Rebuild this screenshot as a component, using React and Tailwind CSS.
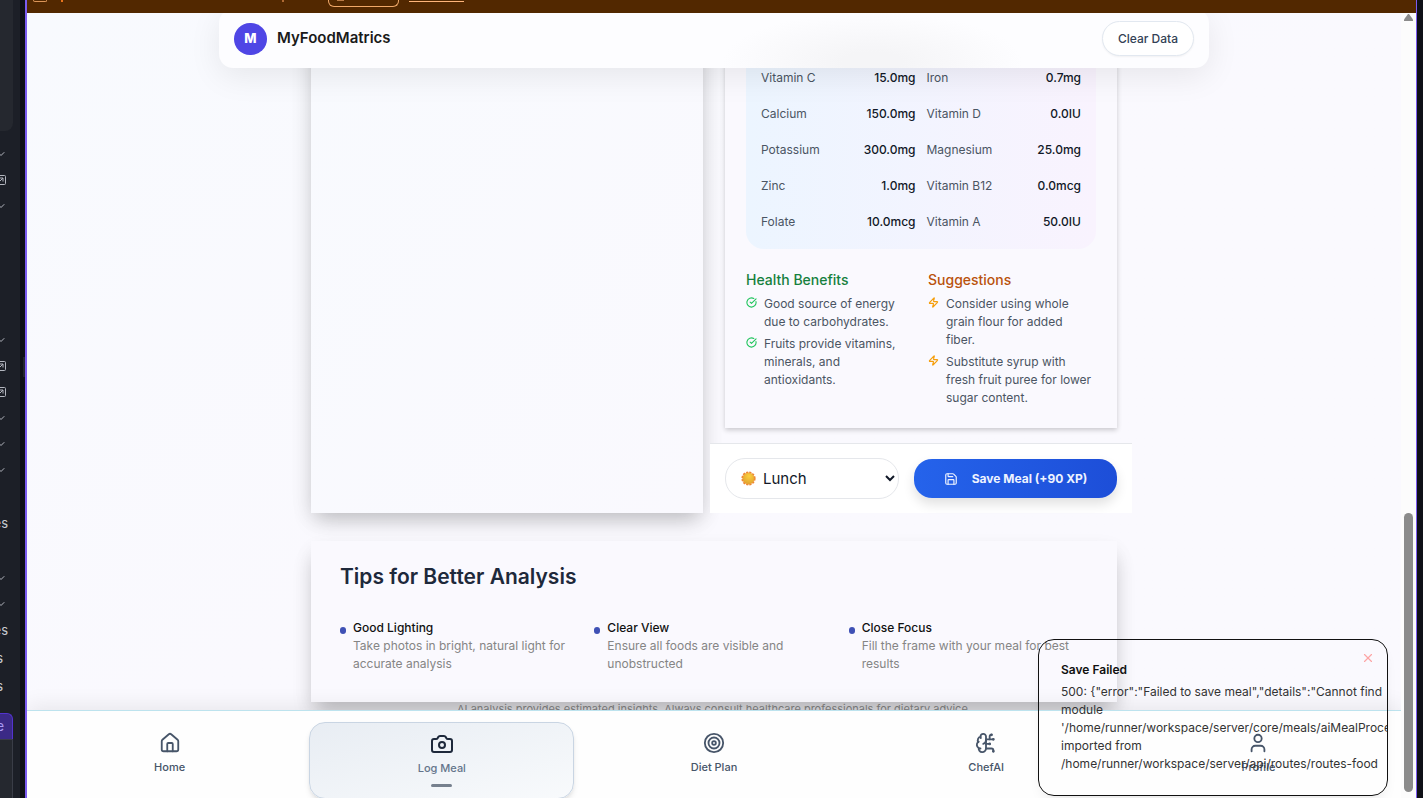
import React from "react";
import {
  BrainCircuit,
  Camera,
  ChevronDown,
  CircleCheckBig,
  House,
  Save,
  Target,
  User,
  X,
  Zap,
} from "lucide-react";

const railRows = [
  "chevron", "external", "chevron", "", "", "", "",
  "chevron", "external", "external", "chevron", "chevron", "chevron", "",
  "es", "", "chevron", "chevron", "es", "s", "s",
];

const nutrients = [
  ["Vitamin C", "15.0mg"], ["Iron", "0.7mg"],
  ["Calcium", "150.0mg"], ["Vitamin D", "0.0IU"],
  ["Potassium", "300.0mg"], ["Magnesium", "25.0mg"],
  ["Zinc", "1.0mg"], ["Vitamin B12", "0.0mcg"],
  ["Folate", "10.0mcg"], ["Vitamin A", "50.0IU"],
];

const benefits = [
  "Good source of energy due to carbohydrates.",
  "Fruits provide vitamins, minerals, and antioxidants.",
];

const suggestions = [
  "Consider using whole grain flour for added fiber.",
  "Substitute syrup with fresh fruit puree for lower sugar content.",
];

const tips = [
  ["Good Lighting", "Take photos in bright, natural light for accurate analysis"],
  ["Clear View", "Ensure all foods are visible and unobstructed"],
  ["Close Focus", "Fill the frame with your meal for best results"],
];

const navItems = [
  { label: "Home", Icon: House },
  { label: "Log Meal", Icon: Camera, active: true },
  { label: "Diet Plan", Icon: Target },
  { label: "ChefAI", Icon: BrainCircuit },
  { label: "Profile", Icon: User },
];

function ExternalIcon() {
  return (
    <svg width="12" height="12" viewBox="0 0 12 12" fill="none" stroke="currentColor" aria-hidden="true">
      <rect x="1.5" y="1.5" width="9" height="9" rx="1" />
      <path d="M4 8l4-4M4.5 4H8v3.5" />
    </svg>
  );
}

function RailRow({ kind }) {
  if (kind === "chevron") {
    return (
      <div className="flex h-[26px] items-center justify-end pr-[13px] text-[#b3b6bf]">
        <ChevronDown size={12} strokeWidth={2} className="shrink-0" />
      </div>
    );
  }
  if (kind === "external") {
    return (
      <div className="flex h-[26px] items-center justify-end pr-[13px] text-[#b3b6bf]">
        <span className="shrink-0"><ExternalIcon /></span>
      </div>
    );
  }
  if (kind === "") {
    return <div className="h-[27px]" />;
  }
  return (
    <div className={`flex h-[28px] items-center justify-end text-[13px] text-[#c9ccd3] ${kind === "s" ? "pr-[17px]" : "pr-[12px]"}`}>
      {kind}
    </div>
  );
}

function Rail() {
  return (
    <aside className="flex w-5 shrink-0 flex-col overflow-hidden bg-[#1c1f27]">
      <div className="mr-[7px] h-[131px] shrink-0 rounded-br-lg bg-[#25282f]" />
      <div className="mt-[10px] flex flex-col">
        {railRows.map((kind, i) => (
          <RailRow key={i} kind={kind} />
        ))}
      </div>
      <div className="mt-3 mr-[7px] flex h-[26px] shrink-0 items-center justify-end rounded-tr-md border-t border-r border-[#5334cf] bg-[#3b2a86] pr-2 text-[13px] text-[#a99bf5]">
        e
      </div>
      <div className="mr-[7px] flex-1 border-t border-r border-[#3a3d47] bg-[#25282f]" />
    </aside>
  );
}

function NoticeBar() {
  return (
    <div className="flex h-[13px] shrink-0 items-start overflow-hidden bg-[#522800] pl-[6px]">
      <span className="h-[2px] w-[14px] rounded-b-sm border border-t-0 border-[#dc9558]" />
      <span className="ml-[14px] h-[2px] w-[2px] bg-[#e8741c]" />
      <span className="ml-[219px] h-[2px] w-[2px] bg-[#b06a33]" />
      <span className="ml-[44px] h-[7px] w-[71px] rounded-b-md border border-t-0 border-[#f0a868] pl-2">
        <span className="block h-[1px] w-[7px] bg-[#b87a46]" />
      </span>
      <span className="ml-[10px] h-[2px] w-[55px] border-b border-[#ffb57a]" />
    </div>
  );
}

function Header() {
  return (
    <header className="absolute inset-x-0 top-0 z-20 flex justify-center px-4">
      <div className="-mt-1 flex h-[59px] w-full max-w-[990px] items-center justify-between rounded-[14px] bg-[#fdfdff] bg-[radial-gradient(150px_50px_at_66%_90%,#f5f5f7_20%,transparent)] px-[15px] shadow-[0_8px_32px_rgba(0,0,0,0.08)]">
        <div className="flex items-center gap-[10px]">
          <div className="flex h-8 w-[33px] items-center justify-center rounded-full bg-[#4f46e5] text-[13px] font-extrabold text-white">M</div>
          <span className="text-[15px] font-semibold text-[#1a1a1a]">MyFoodMatrics</span>
        </div>
        <button type="button" className="h-[35px] rounded-full border border-[#e2e8f0] bg-white px-[15px] text-[12px] font-medium text-[#334155] shadow-xs">
          Clear Data
        </button>
      </div>
    </header>
  );
}

function NoteList({ title, items, Icon, titleClass, iconClass }) {
  return (
    <section>
      <h3 className={`text-[14px] leading-[22px] font-medium ${titleClass}`}>{title}</h3>
      <ul className="mt-1 flex flex-col gap-1">
        {items.map((item) => (
          <li key={item} className="flex items-start gap-[7px] pr-[2px] text-[12px] leading-[18px] text-[#4b5563]">
            <Icon size={11} strokeWidth={2.4} className={`mt-[2px] shrink-0 ${iconClass}`} />
            <span>{item}</span>
          </li>
        ))}
      </ul>
    </section>
  );
}

function ResultCard() {
  return (
    <div className="bg-[#faf9fe] px-[21px] pb-[21px] shadow-[0_2px_5px_rgba(0,0,0,0.2)]">
      <dl className="grid grid-cols-2 gap-x-[11px] rounded-b-[18px] bg-linear-to-r from-[#ecf5ff] to-[#f9f3fe] px-[15px] pt-[47px] pb-[9px]">
        {nutrients.map(([name, amount]) => (
          <div key={name} className="flex h-9 items-center justify-between text-[12px]">
            <dt className="text-[#4b5563]">{name}</dt>
            <dd className="font-medium text-[#111827]">{amount}</dd>
          </div>
        ))}
      </dl>
      <div className="mt-5 grid grid-cols-2 gap-[14px]">
        <NoteList title="Health Benefits" items={benefits} Icon={CircleCheckBig} titleClass="text-[#15803d]" iconClass="text-[#22c55e]" />
        <NoteList title="Suggestions" items={suggestions} Icon={Zap} titleClass="text-[#b9520c]" iconClass="text-[#f59e0b]" />
      </div>
    </div>
  );
}

function SunIcon() {
  return (
    <svg width="15" height="15" viewBox="0 0 15 15" aria-hidden="true">
      <defs>
        <radialGradient id="sun" cx="0.55" cy="0.3" r="0.7">
          <stop offset="0" stopColor="#fbcf3f" />
          <stop offset="1" stopColor="#e0a32e" />
        </radialGradient>
      </defs>
      <circle cx="7.5" cy="7.5" r="6.2" fill="none" stroke="#ee8433" strokeWidth="1.8" strokeDasharray="2.1 1.15" />
      <circle cx="7.5" cy="7.5" r="5.8" fill="url(#sun)" stroke="#ee9433" strokeWidth="0.6" />
    </svg>
  );
}

function SaveBar() {
  return (
    <div className="-mx-[15px] mt-[15px] flex items-center gap-[15px] border-t border-[#e5e7eb] bg-white px-[15px] py-[14px]">
      <div className="relative flex w-[174px] shrink-0">
        <select aria-label="Meal type" defaultValue="lunch" className="h-[41px] w-full rounded-[20px] border border-[#e5e7eb] bg-white pl-[33px] text-[15px] text-[#111827]">
          <option value="lunch">Lunch</option>
        </select>
        <span className="pointer-events-none absolute top-[13px] left-4">
          <SunIcon />
        </span>
      </div>
      <button type="button" className="flex h-[39px] flex-1 items-center justify-center gap-[14px] rounded-[18px] bg-linear-to-r from-[#2563eb] to-[#1d4ed8] text-[12px] font-bold text-[#eef3ff] shadow-[0_6px_12px_rgba(0,0,0,0.12)]">
        <Save size={14} />
        Save Meal (+90 XP)
      </button>
    </div>
  );
}

function TipsCard() {
  return (
    <section className="mt-7 bg-[#faf9fe] px-[29px] pt-[21px] pb-[29px] shadow-[0_14px_20px_-4px_rgba(0,0,0,0.22),0_8px_20px_rgba(0,0,0,0.05)]">
      <h2 className="text-[21px] leading-[30px] font-semibold text-[#1e293b]">Tips for Better Analysis</h2>
      <ul className="mt-[27px] grid grid-cols-3 gap-[15px]">
        {tips.map(([title, text]) => (
          <li key={title} className="flex items-start gap-[7px]">
            <span className="mt-2 h-[7px] w-[6px] shrink-0 rounded-full bg-[#3f51b5]" />
            <div className="text-[12px] leading-[18px]">
              <h3 className="font-medium text-[#111111]">{title}</h3>
              <p className="text-[#858585]">{text}</p>
            </div>
          </li>
        ))}
      </ul>
    </section>
  );
}

function BottomNav() {
  return (
    <nav className="absolute inset-x-0 bottom-0 z-10 grid h-[88px] grid-cols-5 gap-[7px] overflow-hidden border-t border-[#bde3ee] bg-[#fefefe] px-[10px] pt-[11px] shadow-[0_-4px_20px_rgba(0,0,0,0.08)]">
      {navItems.map(({ label, Icon, active }) =>
        active ? (
          <a key={label} href="#log" aria-current="page" className="flex h-[77px] flex-col items-center rounded-[16px] border border-[#c9d5e3] bg-linear-to-br from-[#e8edf3] to-[#f8fafc] pt-[9px] text-[11px] leading-4 font-medium text-[#64748b] shadow-md">
            <Icon size={24} strokeWidth={2} className="text-[#1e293b]" />
            <span className="mt-1">{label}</span>
            <span className="mt-2 h-[3px] w-[21px] rounded-full bg-[#76808e]" />
          </a>
        ) : (
          <a key={label} href="#tab" className="flex h-[77px] flex-col items-center pt-[10px] text-[11px] leading-4 font-medium text-[#475569]">
            <Icon size={22} strokeWidth={2} />
            <span className="mt-[5px]">{label}</span>
          </a>
        )
      )}
    </nav>
  );
}

function Toast() {
  return (
    <div role="alert" className="absolute right-[13px] bottom-[2px] z-30 w-[350px] overflow-hidden rounded-[16px] border border-[#111111] pt-[21px] pb-[22px] pl-[22px] shadow-[0_8px_16px_-8px_rgba(0,0,0,0.15)]">
      <button type="button" aria-label="Close" className="absolute top-[11px] right-3 text-[#fca5a5]">
        <X size={14} />
      </button>
      <p className="text-[12px] leading-[18px] font-semibold text-[#111111]">Save Failed</p>
      <p className="mt-1 text-[12px] leading-[18px] whitespace-nowrap text-[#333333]">
        500: {'{"error":"Failed to save meal","details":"Cannot find'}
        <br />
        module
        <br />
        '/home/runner/workspace/server/core/meals/aiMealProcessor'
        <br />
        imported from
        <br />
        /home/runner/workspace/server/api/routes/routes-food
      </p>
    </div>
  );
}

function Scrollbar() {
  return (
    <div className="flex w-[15px] shrink-0 flex-col items-center bg-[#fcfcfc]">
      <svg width="9" height="8" viewBox="0 0 9 8" className="mt-[1px]" aria-hidden="true">
        <path d="M4 0h1l4 5.5V7H0V5.5z" fill="#8b8b8b" />
      </svg>
      <div className="mt-auto mb-[6px] h-[279px] w-[9px] rounded-full bg-[#8b8b8b]" />
    </div>
  );
}

export default function App() {
  return (
    <div className="flex h-screen overflow-hidden bg-[#0f1017] font-['Inter',sans-serif]">
      <Rail />
      <div className="flex w-[5px] shrink-0 items-center justify-end pb-16">
        <span className="h-5 w-[2px] bg-[#22242d]" />
      </div>
      <main className="mr-[6px] flex min-w-0 flex-1 flex-col border-r border-l-2 border-[#7c5cf0]">
        <NoticeBar />
        <div className="flex min-h-0 flex-1">
          <div className="relative min-w-0 flex-1 overflow-hidden bg-linear-to-br from-[#f8fafe] via-[#faf9fe] to-[#faf9fe]">
            <Header />
            <div className="mx-auto w-full max-w-[806px]">
              <div className="grid grid-cols-2 gap-[22px]">
                <div className="bg-linear-to-br from-[#f8fafe] to-[#faf9fe] shadow-[0_10px_20px_-4px_rgba(0,0,0,0.22),0_4px_24px_rgba(0,0,0,0.06)]" />
                <div>
                  <ResultCard />
                  <SaveBar />
                </div>
              </div>
              <TipsCard />
              <p className="text-center text-[11px] leading-[14px] text-[#7c7c7c]">
                AI analysis provides estimated insights. Always consult healthcare professionals for dietary advice.
              </p>
            </div>
            <BottomNav />
            <Toast />
          </div>
          <Scrollbar />
        </div>
      </main>
    </div>
  );
}
